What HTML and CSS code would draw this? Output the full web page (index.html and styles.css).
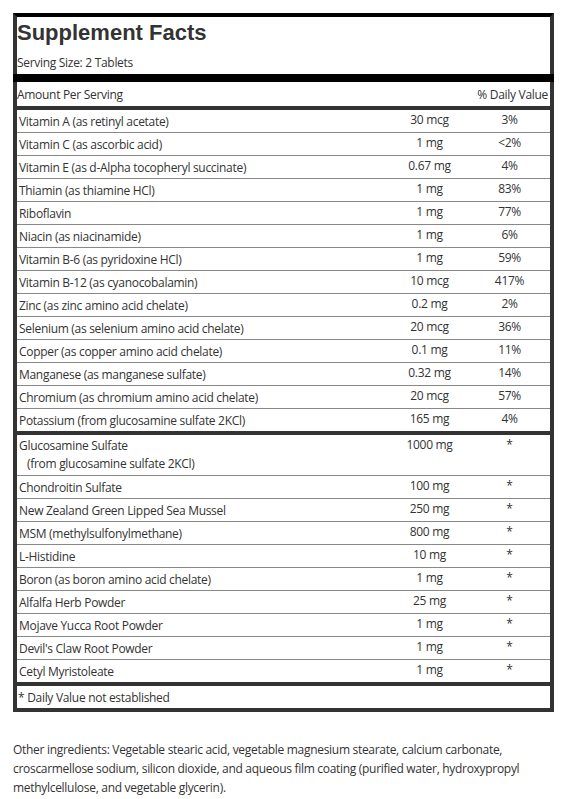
FILE: index.html
```html
<!DOCTYPE html>
<html>
<head>
<title>Supplement Facts</title>
<link rel="stylesheet" href="styles.css">
</head>
<body>

<div class="facts">
    <div class="facts-head">
        <h1 class="facts-title">Supplement Facts</h1>
        <div class="serving">Serving Size: 2 Tablets</div>
    </div>

    <table class="facts-table">
        <colgroup>
            <col class="col-name">
            <col class="col-amount">
            <col class="col-dv">
        </colgroup>
        <thead>
            <tr>
                <th colspan="2" class="amount-head">Amount Per Serving</th>
                <th class="dv-head">% Daily Value</th>
            </tr>
        </thead>
        <tbody>
            <tr><td class="name">Vitamin A (as retinyl acetate)</td><td class="amount">30 mcg</td><td class="dv">3%</td></tr>
            <tr><td class="name">Vitamin C (as ascorbic acid)</td><td class="amount">1 mg</td><td class="dv">&lt;2%</td></tr>
            <tr><td class="name">Vitamin E (as d-Alpha tocopheryl succinate)</td><td class="amount">0.67 mg</td><td class="dv">4%</td></tr>
            <tr><td class="name">Thiamin (as thiamine HCl)</td><td class="amount">1 mg</td><td class="dv">83%</td></tr>
            <tr><td class="name">Riboflavin</td><td class="amount">1 mg</td><td class="dv">77%</td></tr>
            <tr><td class="name">Niacin (as niacinamide)</td><td class="amount">1 mg</td><td class="dv">6%</td></tr>
            <tr><td class="name">Vitamin B-6 (as pyridoxine HCl)</td><td class="amount">1 mg</td><td class="dv">59%</td></tr>
            <tr><td class="name">Vitamin B-12 (as cyanocobalamin)</td><td class="amount">10 mcg</td><td class="dv">417%</td></tr>
            <tr><td class="name">Zinc (as zinc amino acid chelate)</td><td class="amount">0.2 mg</td><td class="dv">2%</td></tr>
            <tr><td class="name">Selenium (as selenium amino acid chelate)</td><td class="amount">20 mcg</td><td class="dv">36%</td></tr>
            <tr><td class="name">Copper (as copper amino acid chelate)</td><td class="amount">0.1 mg</td><td class="dv">11%</td></tr>
            <tr><td class="name">Manganese (as manganese sulfate)</td><td class="amount">0.32 mg</td><td class="dv">14%</td></tr>
            <tr><td class="name">Chromium (as chromium amino acid chelate)</td><td class="amount">20 mcg</td><td class="dv">57%</td></tr>
            <tr><td class="name">Potassium (from glucosamine sulfate 2KCl)</td><td class="amount">165 mg</td><td class="dv">4%</td></tr>
        </tbody>
        <tbody>
            <tr>
                <td class="name name-double">Glucosamine Sulfate<span class="sub">(from glucosamine sulfate 2KCl)</span></td>
                <td class="amount">1000 mg</td>
                <td class="dv">*</td>
            </tr>
            <tr><td class="name">Chondroitin Sulfate</td><td class="amount">100 mg</td><td class="dv">*</td></tr>
            <tr><td class="name">New Zealand Green Lipped Sea Mussel</td><td class="amount">250 mg</td><td class="dv">*</td></tr>
            <tr><td class="name">MSM (methylsulfonylmethane)</td><td class="amount">800 mg</td><td class="dv">*</td></tr>
            <tr><td class="name">L-Histidine</td><td class="amount">10 mg</td><td class="dv">*</td></tr>
            <tr><td class="name">Boron (as boron amino acid chelate)</td><td class="amount">1 mg</td><td class="dv">*</td></tr>
            <tr><td class="name">Alfalfa Herb Powder</td><td class="amount">25 mg</td><td class="dv">*</td></tr>
            <tr><td class="name">Mojave Yucca Root Powder</td><td class="amount">1 mg</td><td class="dv">*</td></tr>
            <tr><td class="name">Devil's Claw Root Powder</td><td class="amount">1 mg</td><td class="dv">*</td></tr>
            <tr><td class="name">Cetyl Myristoleate</td><td class="amount">1 mg</td><td class="dv">*</td></tr>
        </tbody>
        <tfoot>
            <tr><td colspan="3" class="footnote">* Daily Value not established</td></tr>
        </tfoot>
    </table>
</div>

<p class="other">Other ingredients: Vegetable stearic acid, vegetable magnesium stearate, calcium carbonate, croscarmellose sodium, silicon dioxide, and aqueous film coating (purified water, hydroxypropyl methylcellulose, and vegetable glycerin).</p>

</body>
</html>
```

FILE: styles.css
```css
body {
    font-family: 'Open Sans', 'Noto Sans', sans-serif;
    font-size: 12px;
    letter-spacing: -0.3px;
    color: #333;
    background-color: #fff;
    margin: 0;
    padding: 13px 0 0 13px;
}
.facts {
    width: 541px;
    box-sizing: border-box;
    border: 4px solid #333;
    border-top-color: #000;
}
.facts-head {
    padding-bottom: 3px;
    border-bottom: 8px solid #000;
    margin: 0 -4px;
    padding-left: 4px;
    padding-right: 4px;
}
.facts-title {
    font-family: 'Liberation Sans', Arial, sans-serif;
    font-size: 22px;
    font-weight: bold;
    letter-spacing: 0;
    line-height: 26px;
    margin: 3px 0 0 0;
    color: #333;
}
.serving {
    line-height: 16px;
    margin-top: 9px;
}
.facts-table {
    width: 100%;
    border-collapse: separate;
    border-spacing: 0;
    table-layout: fixed;
}
.col-name {
    width: 373px;
}
.col-amount {
    width: 79px;
}
.col-dv {
    width: 81px;
}
th {
    font-weight: normal;
    line-height: 22px;
    padding: 2px 0 0 0;
    border-bottom: 4px solid #333;
}
.amount-head {
    text-align: left;
}
.dv-head {
    text-align: right;
    padding-right: 2px;
    white-space: nowrap;
}
td {
    padding: 0;
    border-bottom: 1px solid #888;
}
tbody tr:last-child td {
    border-bottom: 4px solid #333;
}
.name {
    line-height: 21px;
    padding-top: 1px;
    padding-left: 2px;
    white-space: nowrap;
}
.name-double {
    line-height: 18px;
    padding-top: 2px;
    padding-bottom: 2px;
}
.sub {
    display: block;
    padding-left: 8px;
}
.amount, .dv {
    text-align: center;
    vertical-align: top;
    line-height: 20px;
}
.footnote {
    border-bottom: none;
    line-height: 21px;
    padding-top: 1px;
    padding-left: 1px;
}
.other {
    width: 541px;
    line-height: 19px;
    margin: 28px 0 0 0;
}
```
